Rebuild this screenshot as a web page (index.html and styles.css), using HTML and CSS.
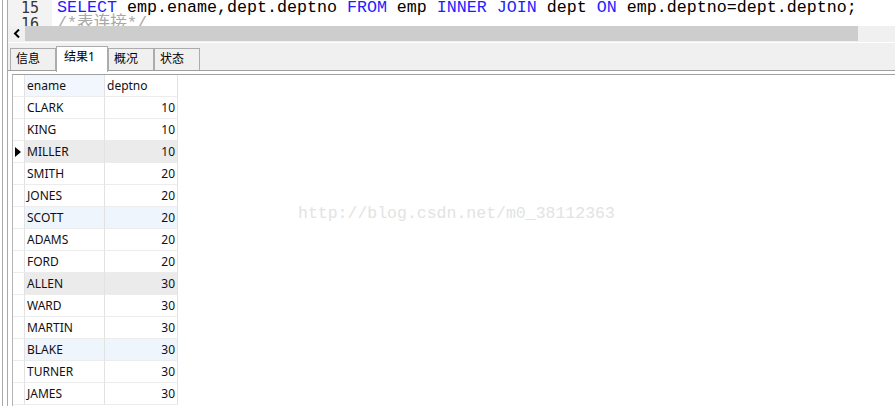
FILE: index.html
```html
<!DOCTYPE html>
<html>
<head>
<meta charset="utf-8">
<link rel="stylesheet" href="styles.css">
</head>
<body>
<div class="app">
  <div class="main">
    <div class="editor">
      <div class="line"><span class="ln">15</span><span class="code"><span class="kw">SELECT</span> emp.ename,dept.deptno <span class="kw">FROM</span> emp <span class="kw">INNER</span> <span class="kw">JOIN</span> dept <span class="kw">ON</span> emp.deptno=dept.deptno;</span></div>
      <div class="line"><span class="ln">16</span><span class="code cm">/*表连接*/</span></div>
    </div>
    <div class="hscroll">
      <span class="arrow"><svg width="8" height="9" viewBox="0 0 8 9"><polyline points="6,0.5 2,4.5 6,8.5" fill="none" stroke="#000" stroke-width="2"/></svg></span>
      <div class="thumb"></div>
    </div>
    <div class="tabs">
      <div class="tab t1">信息</div>
      <div class="tab active">结果1</div>
      <div class="tab t3">概况</div>
      <div class="tab t4">状态</div>
    </div>
    <div class="results">
      <div class="grid">
        <div class="ind"></div><div class="c name hdr-name">ename</div><div class="c">deptno</div>
        <div class="ind"></div><div class="c name">CLARK</div><div class="c num">10</div>
        <div class="ind"></div><div class="c name">KING</div><div class="c num">10</div>
        <div class="ind"><svg width="6" height="10" viewBox="0 0 6 10"><polygon points="0,0 6,5 0,10" fill="#000"/></svg></div><div class="c name gray">MILLER</div><div class="c num gray">10</div>
        <div class="ind"></div><div class="c name">SMITH</div><div class="c num">20</div>
        <div class="ind"></div><div class="c name">JONES</div><div class="c num">20</div>
        <div class="ind"></div><div class="c name blue">SCOTT</div><div class="c num blue">20</div>
        <div class="ind"></div><div class="c name">ADAMS</div><div class="c num">20</div>
        <div class="ind"></div><div class="c name">FORD</div><div class="c num">20</div>
        <div class="ind"></div><div class="c name gray">ALLEN</div><div class="c num gray">30</div>
        <div class="ind"></div><div class="c name">WARD</div><div class="c num">30</div>
        <div class="ind"></div><div class="c name">MARTIN</div><div class="c num">30</div>
        <div class="ind"></div><div class="c name blue">BLAKE</div><div class="c num blue">30</div>
        <div class="ind"></div><div class="c name">TURNER</div><div class="c num">30</div>
        <div class="ind"></div><div class="c name">JAMES</div><div class="c num">30</div>
      </div>
    </div>
  </div>
</div>
<div class="watermark">http://blog.csdn.net/m0_38112363</div>
</body>
</html>
```
FILE: styles.css
```css
* { box-sizing: border-box; }
html, body { margin: 0; padding: 0; background: #fff; }
body {
  position: relative;
  width: 895px;
  height: 406px;
  overflow: hidden;
  font-family: "Noto Sans", "Noto Sans CJK SC", sans-serif;
}
.app {
  height: 406px;
  margin-left: 2px;
  border-left: 1px solid #a9a9a9;
  padding-left: 4px;
}
.main {
  height: 100%;
  border-left: 1px solid #a9a9a9;
  display: flex;
  flex-direction: column;
}
.editor {
  height: 26px;
  overflow: hidden;
  flex: none;
}
.line {
  display: flex;
  height: 16px;
  line-height: 16px;
}
.ln {
  width: 44px;
  flex: none;
  background: #f3f3f3;
  text-align: right;
  padding-right: 13px;
  font-family: "DejaVu Sans Mono", monospace;
  font-size: 15px;
  color: #333;
}
.code {
  padding-left: 5px;
  white-space: pre;
  font-family: "Liberation Mono", monospace;
  font-size: 16.6667px;
  color: #000;
}
.kw { color: #1e1eff; }
.cm { color: #a8a8a8; font-family: "Liberation Mono", "Noto Sans CJK SC", monospace; }
.hscroll {
  height: 17px;
  flex: none;
  background: #f0f0f0;
  border-bottom: 1px solid #fff;
  display: flex;
  align-items: flex-start;
}
.arrow {
  width: 17px;
  height: 15px;
  display: flex;
  align-items: center;
  padding-left: 5px;
}
.thumb {
  width: 833px;
  height: 15px;
  background: #cdcdcd;
}
.tabs {
  height: 28px;
  flex: none;
  background: #f0f0f0;
  border-bottom: 1px solid #a0a0a0;
  display: flex;
  align-items: flex-end;
  padding-left: 2px;
}
.tab {
  width: 46px;
  height: 22px;
  border: 1px solid #acacac;
  border-bottom: none;
  background: #f0f0f0;
  font-size: 12px;
  line-height: 20px;
  padding-left: 5px;
  color: #000;
}
.tab.active {
  width: 52px;
  height: 26px;
  margin-bottom: -2px;
  background: #fff;
  padding-left: 7px;
  line-height: 20px;
  position: relative;
}
.results {
  margin-top: 3px;
  margin-left: 4px;
  border-top: 1px solid #a0a0a0;
  border-left: 1px solid #b5b5b5;
  flex: 1;
}
.grid {
  display: grid;
  grid-template-columns: 12px 80px 73px;
  grid-auto-rows: 22px;
}
.ind {
  border-right: 1px solid #e2e2e2;
  border-bottom: 1px solid #ececec;
  display: flex;
  align-items: center;
  padding-left: 2px;
}
.c {
  border-right: 1px solid #e2e2e2;
  border-bottom: 1px solid #ececec;
  font-size: 12px;
  line-height: 21px;
  padding: 0 2px;
  color: #111;
  white-space: nowrap;
}
.num { text-align: right; }
.hdr-name { background: #f2f7fd; }
.gray { background: #ebebeb; }
.blue { background: #eef5fd; }
.watermark {
  position: absolute;
  left: 298px;
  top: 204px;
  font-family: "Liberation Mono", monospace;
  font-size: 16.5px;
  line-height: 20px;
  color: #e3e3e3;
  white-space: nowrap;
}
```
